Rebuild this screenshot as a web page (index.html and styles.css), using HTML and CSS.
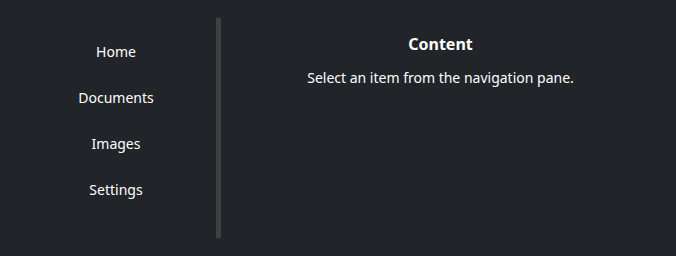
FILE: index.html
```html
<!DOCTYPE html>
<html lang="en">
<head>
	<meta charset="UTF-8">
	<title>Navigation</title>
	<link rel="stylesheet" href="styles.css">
</head>
<body>
	<div id="Box">
		<ul id="Nav">
			<li class="NavItem">Home</li>
			<li class="NavItem">Documents</li>
			<li class="NavItem">Images</li>
			<li class="NavItem">Settings</li>
		</ul>
		<div id="Content">
			<h1 id="Title">Content</h1>
			<p id="Desc">Select an item from the navigation pane.</p>
		</div>
	</div>
</body>
</html>
```

FILE: styles.css
```css
html,body{
	height: 100%;
}
body,ul,h1,p{
	margin: 0;padding: 0;
}
body{
	background: #212428;color: #fff;font-family: "Noto Sans", "Open Sans", sans-serif;font-size: 14px;
}
#Box{
	display: flex;padding: 18px 16px;height: 220px;
}
#Nav{
	list-style: none;width: 200px;border-right: 5px solid #3e4144;padding-top: 18px;
}
.NavItem{
	height: 46px;line-height: 32px;text-align: center;
}
#Content{
	flex: 1;text-align: center;padding-top: 16px;
}
#Title{
	font-size: 16px;font-weight: bold;line-height: 20px;
}
#Desc{
	margin-top: 14px;line-height: 20px;
}
```
